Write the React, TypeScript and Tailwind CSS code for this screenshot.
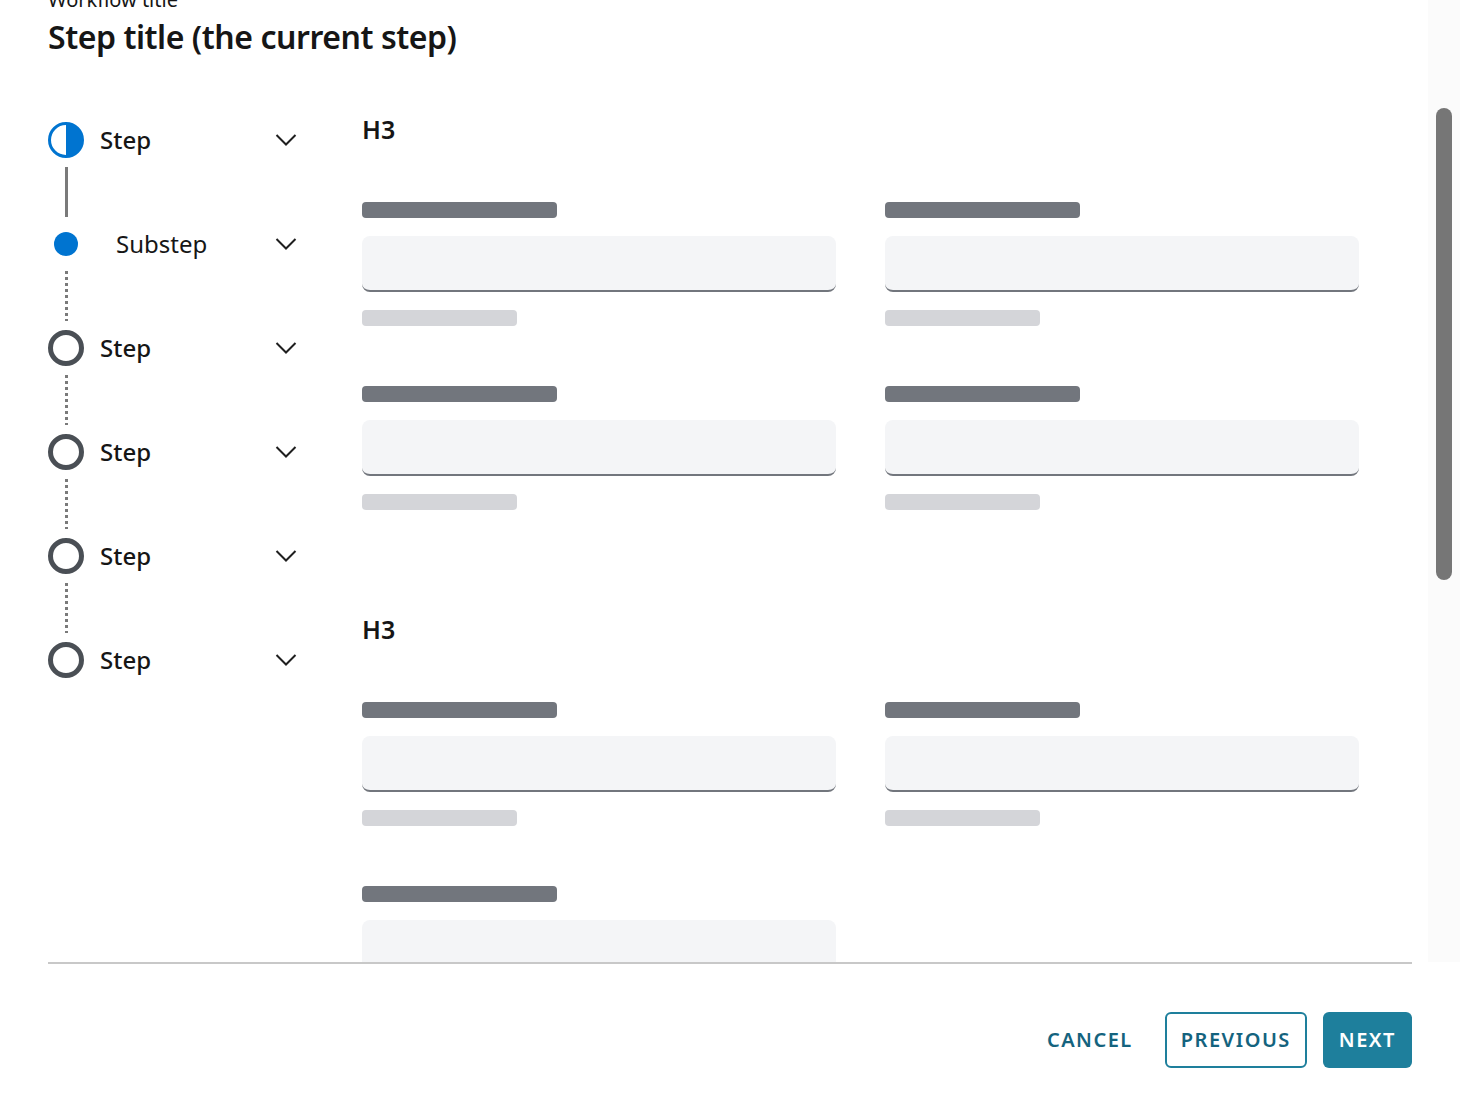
import React from 'react';

const font = "font-['Noto_Sans','Open_Sans',sans-serif]";

type StepKind = 'current' | 'substep' | 'todo';

const steps: { label: string; kind: StepKind; line?: 'solid' | 'dotted' }[] = [
  { label: 'Step', kind: 'current', line: 'solid' },
  { label: 'Substep', kind: 'substep', line: 'dotted' },
  { label: 'Step', kind: 'todo', line: 'dotted' },
  { label: 'Step', kind: 'todo', line: 'dotted' },
  { label: 'Step', kind: 'todo', line: 'dotted' },
  { label: 'Step', kind: 'todo' },
];

const Chevron: React.FC = () => (
  <svg width="22" height="14" viewBox="0 0 22 14" className="mr-[3px]">
    <polyline points="1.5,2 11,11.5 20.5,2" fill="none" stroke="#1f1f1f" strokeWidth="2" />
  </svg>
);

const StepMarker: React.FC<{ kind: StepKind }> = ({ kind }) => {
  if (kind === 'current') {
    return (
      <svg width="36" height="36" viewBox="0 0 36 36">
        <circle cx="18" cy="18" r="16.5" fill="#fff" stroke="#0074d0" strokeWidth="3" />
        <path d="M18 1.5 A16.5 16.5 0 0 1 18 34.5 Z" fill="#0074d0" />
      </svg>
    );
  }
  if (kind === 'substep') {
    return <div className="w-6 h-6 rounded-full bg-[#0074d0]" />;
  }
  return <div className="w-9 h-9 rounded-full border-[5px] border-[#4a4f55]" />;
};

const Stepper: React.FC = () => (
  <div className="w-[252px] pt-[9px]">
    {steps.map((s, i) => (
      <div key={i}>
        <div className="flex items-center h-9">
          <div className="w-9 h-9 flex items-center justify-center shrink-0">
            <StepMarker kind={s.kind} />
          </div>
          <span
            className={`flex-1 text-[24px] leading-8 text-[#161616] ${
              s.kind === 'substep' ? 'pl-8 font-normal' : 'pl-4 font-medium'
            }`}
          >
            {s.label}
          </span>
          <Chevron />
        </div>
        {s.line && (
          <div className="w-9 h-[68px] flex justify-center py-[9px]">
            {s.line === 'solid' ? (
              <div className="w-[3px] h-full bg-[#7a7a7a]" />
            ) : (
              <div className="w-[3px] h-full bg-[repeating-linear-gradient(to_bottom,#7a7a7a_0_3px,transparent_3px_6px)]" />
            )}
          </div>
        )}
      </div>
    ))}
  </div>
);

const Field: React.FC = () => (
  <div className="flex flex-col">
    <div className="w-[195px] h-4 rounded bg-[#72767d]" />
    <div className="mt-[18px] h-14 rounded-lg bg-[#f4f5f7] border-b-2 border-[#72767d]" />
    <div className="mt-[18px] w-[155px] h-4 rounded bg-[#d4d5d9]" />
  </div>
);

const Section: React.FC<{ fields: number }> = ({ fields }) => (
  <section>
    <h3 className="text-[25px] leading-8 font-semibold text-[#161616]">H3</h3>
    <div className="mt-[57px] grid grid-cols-[474px_474px] gap-x-[49px] gap-y-[60px]">
      {Array.from({ length: fields }).map((_, i) => (
        <Field key={i} />
      ))}
    </div>
  </section>
);

export default function App() {
  return (
    <div className={`w-[1460px] h-[1116px] bg-white flex flex-col overflow-hidden ${font}`}>
      <div className="flex h-[962px] shrink-0">
        <div className="flex-1 overflow-hidden pl-12">
          <div className="-mt-[14px]">
            <p className="text-[20px] leading-7 text-[#161616]">Workflow title</p>
            <h1 className="mt-[3px] text-[32px] leading-10 font-semibold text-[#161616] tracking-[-0.45px]">
              Step title (the current step)
            </h1>
            <div className="mt-[56px] flex">
              <div className="w-[314px] shrink-0">
                <Stepper />
              </div>
              <div className="flex flex-col gap-[103px]">
                <Section fields={4} />
                <Section fields={3} />
              </div>
            </div>
          </div>
        </div>
        <div className="w-8 shrink-0 bg-[#fbfbfb] pt-[108px] flex justify-center">
          <div className="w-4 h-[472px] rounded-full bg-[#767676]" />
        </div>
      </div>
      <div className="px-12">
        <div className="h-[2px] bg-[#c8c8c8]" />
        <div className="mt-12 flex justify-end gap-4 text-[20px] font-semibold tracking-[1.5px]">
          <button className="h-14 px-4 text-[#14637e]">CANCEL</button>
          <button className="h-14 px-[14px] rounded-md border-2 border-[#1e7f9c] text-[#14637e]">
            PREVIOUS
          </button>
          <button className="h-14 px-4 rounded-md bg-[#1e7f9c] text-white">NEXT</button>
        </div>
      </div>
    </div>
  );
}
